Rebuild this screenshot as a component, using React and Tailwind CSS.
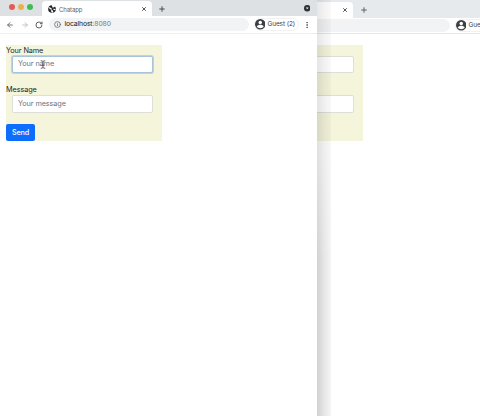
import React from "react";
import { ArrowLeft, ArrowRight, RotateCw, Info, X, Plus, EllipsisVertical } from "lucide-react";

function UserIcon() {
  return (
    <svg viewBox="0 0 20 20" className="size-[10.500px] shrink-0">
      <circle cx="10" cy="10" r="10" fill="#3c4043" />
      <circle cx="10" cy="6.6" r="3.3" fill="#fff" />
      <path d="M3.4 14.2c1.2-2.3 4-3.3 6.6-3.3s5.400 1 6.600 3.300c-1.500 2-3.800 3.300-6.600 3.300s-5.100-1.300-6.600-3.300z" fill="#fff" />
    </svg>
  );
}

function Favicon() {
  return (
    <svg viewBox="0 0 24 24" className="size-[8px] shrink-0">
      <circle cx="12" cy="12" r="11.500" fill="#202124" />
      <path d="M0 5l10 4 2 5-6-1zM11 0l3 8 8-3-5-5zM14 11l10 1-5 4zM8 17l5 7 3-5-4-5z" fill="#fff" />
    </svg>
  );
}

function ChatForm({ focused }) {
  return (
    <form className="flex h-24 w-[156px] flex-col items-start bg-[#f5f5dc] text-[7.300px] tracking-[-0.100px] text-[#212529]">
      <label className="h-[10.500px] whitespace-nowrap leading-[11px]">Your Name</label>
      <div
        className={
          focused
            ? "ml-[5.500px] flex h-[17.500px] w-[141px] items-center rounded-[2px] border border-[#a9c3df] bg-white pl-[5.500px] pt-px text-[7.300px] text-[#6c757d] ring-1 ring-[#bfd2e4]"
            : "ml-[5.500px] flex h-[17.500px] w-[141px] items-center rounded-[2px] border border-[#dddfd8] bg-white pl-[5.500px] pt-px text-[7.300px] text-[#6c757d]"
        }
      >
        Your name
      </div>
      <label className="mt-[11.500px] h-[10.500px] leading-[10px]">Message</label>
      <div className="ml-[5.500px] flex h-[17.500px] w-[141px] items-center rounded-[2px] border border-[#dddfd8] bg-white pl-[5.500px] pt-px text-[7.300px] text-[#6c757d]">
        Your message
      </div>
      <button type="button" className="mt-[11px] h-[17px] w-[29px] rounded-[2px] bg-[#0d6efd] text-[7.200px] font-medium leading-[17px] text-white">
        Send
      </button>
    </form>
  );
}

function BrowserWindow({ front }) {
  return (
    <div className="flex h-[416px] w-[317px] flex-col bg-white">
      <header className={front ? "flex h-4 shrink-0 bg-[#dee1e4]" : "flex h-[17px] shrink-0 bg-[#e7eaed]"}>
        <div className="flex w-[42px] items-center gap-[3px] pb-[2px] pl-[9px]">
          <span className="size-[6px] rounded-full bg-[#e35b57]" />
          <span className="size-[6px] rounded-full bg-[#e9b14c]" />
          <span className="size-[6px] rounded-full bg-[#3fbd51]" />
        </div>
        <div className="mt-px flex w-[110px] items-center rounded-t-[4px] bg-white pl-[6px] pr-[5px]">
          <Favicon />
          <span className="ml-[3px] flex-1 pt-px text-[6px] tracking-[-0.080px] text-[#5f6368]">Chatapp</span>
          <X className="size-[6px] text-[#3c4043]" strokeWidth={3.5} />
        </div>
        <Plus className={front ? "ml-[6px] mt-[4.500px] size-[8px] text-[#4a4d50]" : "ml-[6.500px] mt-[4.500px] size-[8px] text-[#606367]"} strokeWidth={3} />
        {front && (
          <svg viewBox="0 0 12 12" className="ml-auto mr-[7px] mt-[5px] size-[6.500px]">
            <circle cx="6" cy="6" r="6" fill="#303134" />
            <path d="M3.500 4.700h5L6 8z" fill="#fff" />
          </svg>
        )}
      </header>
      <div
        className={
          front
            ? "flex h-[18px] shrink-0 items-center border-b border-[#eceef0] pl-[6px] text-[#5f6368]"
            : "flex h-[16px] shrink-0 items-center border-b border-[#e4e6e8] pl-[6px] text-[#5f6368]"
        }
      >
        <ArrowLeft className="size-[8px] shrink-0" strokeWidth={2.7} />
        <ArrowRight className="ml-[7px] size-[8px] shrink-0 text-[#babcbe]" strokeWidth={2.7} />
        <RotateCw className="ml-[6px] size-[8px] shrink-0" strokeWidth={3} />
        <div className="ml-[6px] flex h-[13px] w-[200px] shrink-0 items-center rounded-full bg-[#f1f3f4] pl-[5px]">
          {front && (
            <>
              <Info className="size-[7px]" strokeWidth={2.6} />
              <span className="ml-[3.500px] text-[6.800px] tracking-[-0.120px] text-[#202124]">
                localhost<span className="text-[#777b7f]">:8080</span>
              </span>
            </>
          )}
        </div>
        <div className="ml-[4.500px] flex h-[13px] w-[45px] shrink-0 items-center whitespace-nowrap rounded-full border border-[#f0f1f2]">
          <UserIcon />
          <span className="ml-[2.500px] text-[6.500px] tracking-[-0.120px] text-[#3c4043]">Guest (2)</span>
        </div>
        <EllipsisVertical className="ml-[4.500px] size-[8px] shrink-0" strokeWidth={3} />
      </div>
      <main className={front ? "pl-[6px] pt-[11px]" : "pl-[6px] pt-[11px]"}>
        <ChatForm focused={front} />
      </main>
    </div>
  );
}

export default function App() {
  return (
    <div className="relative h-[417px] w-[480px] overflow-hidden bg-white font-['Inter','Liberation_Sans',sans-serif]">
      <div className="absolute left-[201px] top-px">
        <BrowserWindow front={false} />
      </div>
      <div className="absolute left-[201px] top-0 h-px w-[279px] bg-[#e7eaed]" />
      <div className="absolute left-[317px] top-0 h-[416px] w-[14px] bg-linear-to-r from-black/18 via-black/10 to-black/4 [mask-image:linear-gradient(to_bottom,rgba(0,0,0,0.5),rgba(0,0,0,0.65)_140px,#000_260px)]" />
      <div className="absolute left-0 top-0">
        <BrowserWindow front />
      </div>
      <svg viewBox="0 0 8 12" className="absolute left-[40px] top-[60px] h-[9px] w-[6px]" fill="none" stroke="#444" strokeWidth="1.100">
        <path d="M1 1q2 0 3 1 1-1 3-1M4 2v8M1 11q2 0 3-1 1 1 3 1M2.500 7h3" />
      </svg>
    </div>
  );
}
